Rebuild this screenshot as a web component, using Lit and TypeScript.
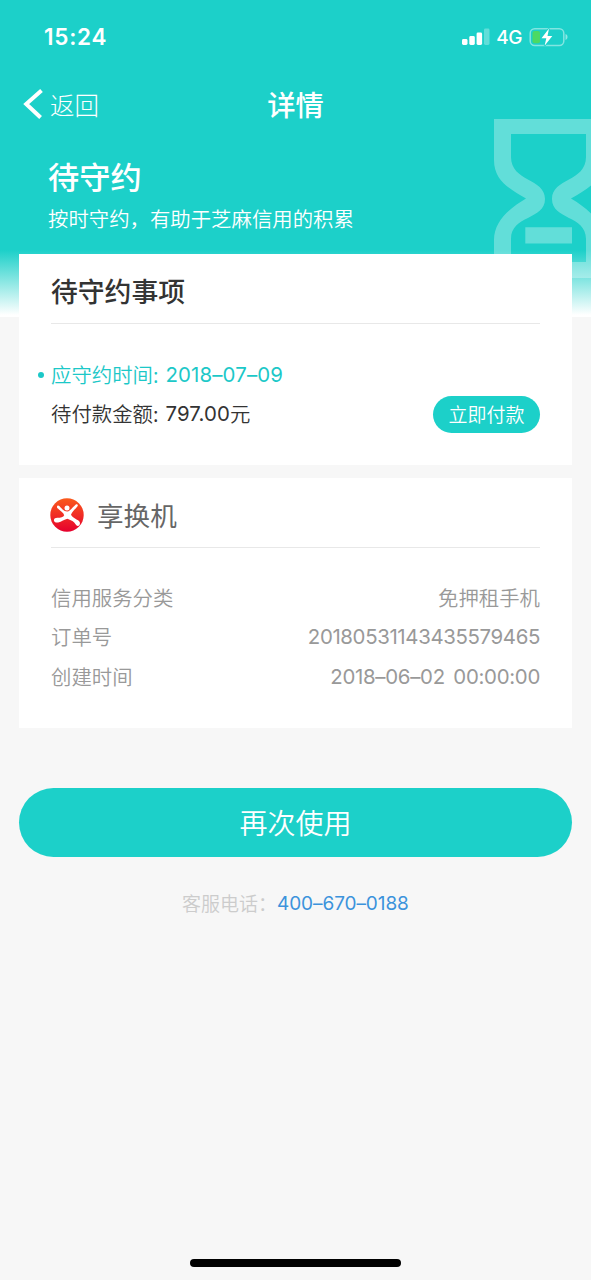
import { LitElement, html, css, svg } from "lit";
import { customElement, property } from "lit/decorators.js";

const hourglass = svg`
  <path fill="#fff" fill-opacity="0.31" fill-rule="evenodd"
    d="M0 0H109V41C109 62 93 70 77 79.5C93 89 109 102 109 121V159H0V121C0 102 16 89 32 79.5C16 70 0 62 0 41Z
       M17 15V38C17 63 51 59 51 80C51 101 17 96 17 120V143H92V120C92 96 58 101 58 80C58 59 92 63 92 38V15Z"/>
  <path fill="#fff" fill-opacity="0.31" d="M31.300 108.300H78V124.600H31.300Z"/>`;

@customElement("status-bar")
export class StatusBar extends LitElement {
  static styles = css`
    :host { display: flex; height: 74px; align-items: center; justify-content: space-between; padding: 0 22px 0 44px; color: #fff; }
    .time { font: 600 22.500px/30px Inter, sans-serif; letter-spacing: 0.750px; }
    .right { display: flex; align-items: center; }
    .net { font: 500 19px/24px Inter, sans-serif; margin: 1px 7px 0 6px; letter-spacing: -0.400px; }
    svg { display: block; }
  `;
  render() {
    return html`
      <div class="time">15:24</div>
      <div class="right">
        <svg width="28" height="18" viewBox="0 0 28 18" fill="#fff">
          <rect x="0" y="11" width="5.500" height="6" rx="1.400" />
          <rect x="7.300" y="8" width="5.500" height="9" rx="1.400" />
          <rect x="14.600" y="4.500" width="5.500" height="12.500" rx="1.400" />
          <rect x="22" y="0.500" width="5.500" height="16.500" rx="1.400" opacity="0.300" />
        </svg>
        <div class="net">4G</div>
        <svg width="40" height="20" viewBox="0 0 40 20">
          <rect x="1.200" y="1.700" width="33.600" height="16.800" rx="4.500" fill="none" stroke="#fff" stroke-opacity="0.450" stroke-width="1.500" />
          <path d="M36.500 7v6c1.300-.4 2-1.600 2-3s-.7-2.600-2-3z" fill="#fff" fill-opacity="0.500" />
          <rect x="3.500" y="4" width="7.500" height="12.200" rx="2" fill="#4cd964" />
          <path d="M20 1.500L12.500 11.200H17.300L15.600 18.800L23.300 8.900H18.500Z" fill="#fff" stroke="#1cd0c9" stroke-width="1.600" paint-order="stroke" />
        </svg>
      </div>
    `;
  }
}

@customElement("info-row")
export class InfoRow extends LitElement {
  @property() label = "";
  static styles = css`
    :host { display: flex; height: 39.500px; align-items: center; justify-content: space-between; color: #999; font-size: 20.400px; line-height: 30px; }
    .label { padding-bottom: 2px; }
  `;
  render() {
    return html`<span class="label">${this.label}</span><slot></slot>`;
  }
}

@customElement("app-root")
export class AppRoot extends LitElement {
  static styles = css`
    :host { display: block; background: #fff; font-family: "Noto Sans CJK SC", sans-serif; font-weight: 350; }
    .page { display: flex; flex-direction: column; height: 1280px; margin-right: 1px; background: #f7f7f7; overflow: hidden; position: relative; }
    .head { height: 317px; flex: none; margin-bottom: -63px; background: linear-gradient(#1cd0c9 0, #1cd0c9 250px, #fff 315px); color: #fff; position: relative; overflow: hidden; }
    .glass { position: absolute; left: 494px; top: 119px; }
    .nav { display: grid; grid-template-columns: 1fr auto 1fr; align-items: center; height: 60px; }
    .back { display: flex; align-items: center; gap: 7px; padding-left: 23px; font-size: 24.500px; line-height: 34px; font-weight: 300; }
    .back span { padding-top: 1px; }
    .title { font-size: 28.300px; line-height: 40px; font-weight: 500; }
    .state { margin: 20px 0 0 48px; font-size: 31.200px; line-height: 44px; font-weight: 500; }
    .hint { margin: 5px 0 0 48px; font-size: 20.400px; line-height: 30px; }
    .card { position: relative; flex: none; box-sizing: border-box; margin: 0 19px; padding: 0 32px; background: #fff; }
    .due { height: 211px; }
    .order { height: 250px; margin-top: 13px; }
    .cardhead { display: flex; align-items: center; height: 69px; border-bottom: 1px solid #e8e8e8; font-size: 26.800px; color: #333; font-weight: 500; }
    .cardhead span { line-height: 40px; margin-top: 5px; }
    .shop { font-weight: 400; font-size: 26.600px; color: #666; gap: 13px; }
    .shop svg { margin: 5px 0 0 -1px; }
    .shop span { margin-top: 4px; }
    .n { font-family: Inter, sans-serif; font-weight: 370; }
    .line { display: flex; align-items: center; height: 39.500px; font-size: 20.400px; line-height: 30px; color: #333; }
    .zh { padding-bottom: 2px; }
    .lines { padding-top: 31px; }
    .on { color: #1cc8c8; }
    .dot { width: 6px; height: 6px; border-radius: 50%; background: #1cc8c8; margin: 0 7px 0 -13px; }
    .pay { margin-left: auto; width: 107px; height: 37px; border-radius: 19px; background: #1cd0c9; color: #fff; font-size: 19px; line-height: 36px; text-align: center; }
    .rows { padding-top: 30px; }
    .again { flex: none; margin: 60px 19px 0; height: 69px; border-radius: 35px; background: #1cd0c9; color: #fff; font-size: 28px; line-height: 68px; text-align: center; }
    .tel { display: flex; align-items: center; margin: 31px 0 0 182px; font-size: 19px; line-height: 30px; color: #ccc; }
    .tel .n { color: #3c93dc; }
    .home { width: 211px; height: 8px; border-radius: 4px; background: #000; margin: auto auto 13px 190px; }
    .date, .money { letter-spacing: 0.150px; margin-left: 7px; }
    .id { letter-spacing: -0.350px; }
    .stamp { letter-spacing: -0.280px; word-spacing: 3px; }
    .phone { letter-spacing: -0.080px; }
  `;
  render() {
    return html`
      <div class="page">
        <div class="head">
          <svg class="glass" width="109" height="160" viewBox="0 0 109 160">${hourglass}</svg>
          <status-bar></status-bar>
          <div class="nav">
            <div class="back">
              <svg width="20" height="30" viewBox="0 0 20 30"><path d="M18.500 1.500L3.200 15L17.600 28.500" fill="none" stroke="#fff" stroke-width="4" /></svg>
              <span>返回</span>
            </div>
            <div class="title">详情</div>
            <div></div>
          </div>
          <div class="state">待守约</div>
          <div class="hint">按时守约，有助于芝麻信用的积累</div>
        </div>
        <div class="card due">
          <div class="cardhead"><span>待守约事项</span></div>
          <div class="lines">
            <div class="line on"><i class="dot"></i><span class="zh">应守约时间:</span><span class="n date">2018–07–09</span></div>
            <div class="line"><span class="zh">待付款金额:</span><span class="n money">797.00</span><span class="zh">元</span><div class="pay">立即付款</div></div>
          </div>
        </div>
        <div class="card order">
          <div class="cardhead shop">
            <svg width="34" height="34" viewBox="0 0 34 34">
              <defs><linearGradient id="g" x1="0" y1="0" x2="0" y2="1"><stop stop-color="#fa5a1c" /><stop offset="1" stop-color="#e6002d" /></linearGradient></defs>
              <circle cx="17" cy="17" r="16.700" fill="url(#g)" />
              <circle cx="17" cy="10" r="2.500" fill="#fff" />
              <path fill="#fff" d="M8.200 7.600C9.800 8 11 10.200 12.600 11.600C14 12.800 15.500 13.500 17.200 13.500C20.500 13.200 22.500 9 25.800 6.400C27.200 5.800 28.400 7 27.500 8.300C25.300 11.300 22 13.500 21 16.800C22.500 19.800 26.500 21 29.200 23.200C30.800 25 29.700 28 27.800 28C25.800 27.600 25.600 25.600 24 24.200C22 22.500 19.500 21.500 17.500 20.700C14.500 21.200 11.500 23.800 8.200 24.500C5.800 24.900 4 24 3.900 22.300C3.900 20.300 6 19.700 7.500 19.800C10.500 19.800 13.500 19 14.200 17.200C13.500 14.600 10.200 12.700 7.500 10.300C6.500 9.200 7 7.600 8.200 7.600Z" />
            </svg>
            <span>享换机</span>
          </div>
          <div class="rows">
            <info-row label="信用服务分类"><span class="zh">免押租手机</span></info-row>
            <info-row label="订单号"><span class="n id">20180531143435579465</span></info-row>
            <info-row label="创建时间"><span class="n stamp">2018–06–02 00:00:00</span></info-row>
          </div>
        </div>
        <div class="again">再次使用</div>
        <div class="tel"><span class="zh">客服电话：</span><span class="n phone">400–670–0188</span></div>
        <div class="home"></div>
      </div>
    `;
  }
}
